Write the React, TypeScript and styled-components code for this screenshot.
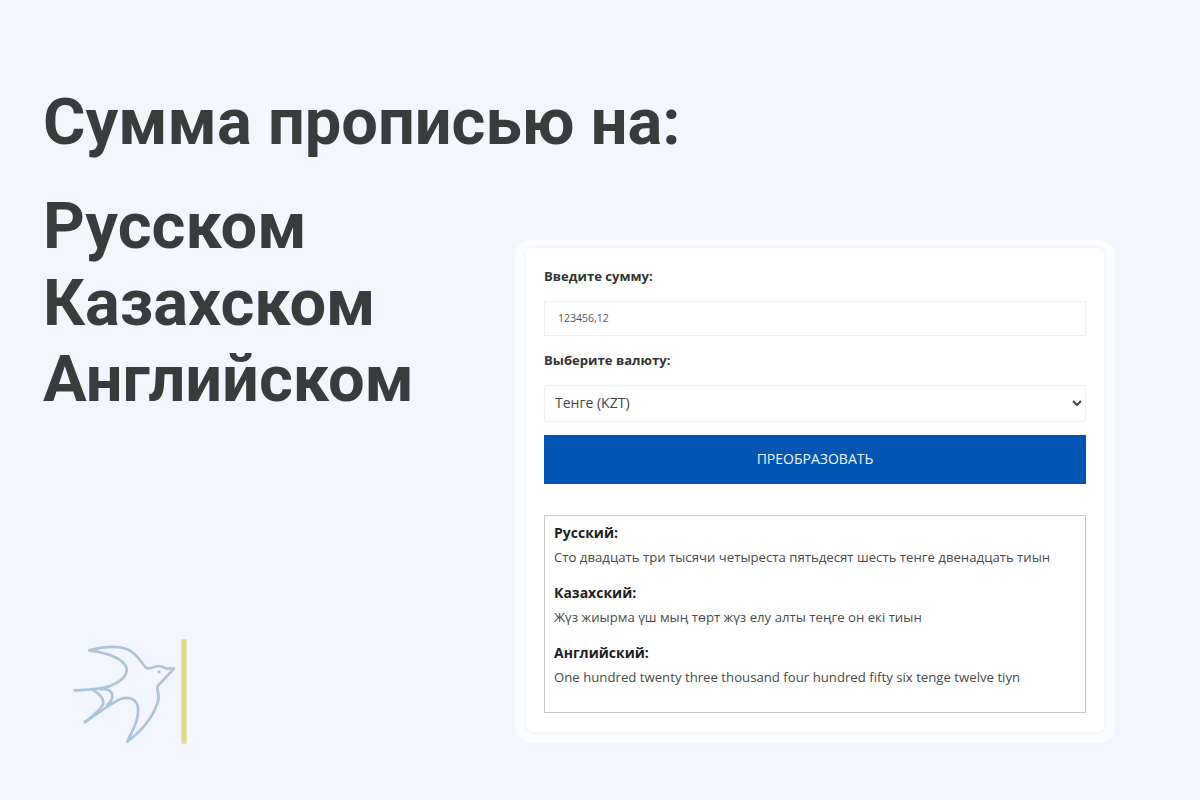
import { createGlobalStyle } from 'styled-components';
import styled from 'styled-components';

const GlobalStyle = createGlobalStyle`
  html, body {
    margin: 0;
    padding: 0;
    background: #f3f6ff;
  }
`;

const Page = styled.div`
  width: 1200px;
  height: 800px;
  box-sizing: border-box;
  padding: 0 85px 0 43px;
  display: flex;
  justify-content: space-between;
  overflow: hidden;
  background: #f3f6ff;
`;

// fixed width, the title is allowed to run over the card column
const LeftColumn = styled.div`
  width: 472px;
  display: flex;
  flex-direction: column;
  font-family: Roboto, sans-serif;
  font-weight: 700;
  color: #3a3b3d;
`;

const Title = styled.h1`
  margin: 84px 0 0;
  font-size: 65px;
  line-height: 76px;
  font-weight: 700;
  white-space: nowrap;
`;

const Languages = styled.div`
  margin-top: 28px;
  font-size: 65px;
  line-height: 76.5px;
  white-space: nowrap;
`;

const LogoRow = styled.div`
  margin-top: 202px;
  margin-left: 7px;
`;

const Frame = styled.div`
  margin-top: 240px;
  width: 600px;
  height: 503px;
  flex-shrink: 0;
  box-sizing: border-box;
  padding: 8px 11px 11px;
  background: #fbfcff;
  border-radius: 16px;
`;

const Card = styled.div`
  height: 100%;
  box-sizing: border-box;
  padding: 18px 18px 18px;
  background: #fff;
  border-radius: 8px;
  box-shadow: 0 0 4px rgba(40, 50, 90, 0.08);
  font-family: "Open Sans", sans-serif;
  color: #3a3a3a;
`;

const Label = styled.label`
  display: block;
  font-size: 13.1px;
  line-height: 20px;
  font-weight: 700;
  color: #333;
`;

const AmountInput = styled.input`
  display: block;
  width: 100%;
  height: 35px;
  box-sizing: border-box;
  margin: 15px 0 14px;
  padding: 0 10px 2px 13px;
  border: 1px solid #f0f0f0;
  border-radius: 0;
  background: #fff;
  font-family: "Open Sans", sans-serif;
  font-size: 10.5px;
  color: #555;
`;

const CurrencySelect = styled.select`
  display: block;
  width: 100%;
  height: 37px;
  box-sizing: border-box;
  margin: 15px 0 13px;
  padding: 0 6px 2px;
  border: 1px solid #f0f0f0;
  border-radius: 2px;
  background: #fff;
  font-family: "Open Sans", sans-serif;
  font-size: 14px;
  color: #444;
`;

const ConvertButton = styled.button`
  display: block;
  width: 100%;
  height: 49px;
  padding: 0 0 2px;
  border: 0;
  background: #0255b3;
  color: #eef4fb;
  font-family: "Open Sans", sans-serif;
  font-size: 14px;
  text-transform: uppercase;
`;

const ResultBox = styled.div`
  margin-top: 31px;
  height: 198px;
  box-sizing: border-box;
  padding: 7px 9px;
  border: 1px solid #c8c8c8;
`;

const ResultBlock = styled.div`
  margin-bottom: 16px;
`;

const ResultTitle = styled.div`
  font-size: 14px;
  line-height: 20px;
  font-weight: 700;
  color: #1d1d1d;
`;

const ResultText = styled.p`
  margin: 4px 0 0;
  font-size: 13.2px;
  line-height: 20px;
  color: #4a4a4a;
  white-space: nowrap;
`;

const results = [
  { title: 'Русский:', text: 'Сто двадцать три тысячи четыреста пятьдесят шесть тенге двенадцать тиын' },
  { title: 'Казахский:', text: 'Жүз жиырма үш мың төрт жүз елу алты теңге он екі тиын' },
  { title: 'Английский:', text: 'One hundred twenty three thousand four hundred fifty six tenge twelve tiyn' },
];

// bird + yellow bar, coordinates taken from the 3x crop
function Logo() {
  return (
    <svg width="160" height="140" viewBox="0 0 480 420" fill="none">
      <g stroke="#adc4db" strokeWidth="8" strokeLinejoin="round" strokeLinecap="round">
        {/* head, back, upper wing down to the tail tip */}
        <path d="M74 211 C110 210 150 209 180 198 C205 190 228 172 230 152 C232 130 205 115 180 105 C160 98 138 94 118 91 C160 80 205 78 232 88 C258 98 272 125 288 143 C298 150 310 140 325 138 C334 138 342 142 348 145 L372 146 L349 170 C340 182 328 190 322 200 C320 215 332 225 322 250 C305 300 265 340 232 365 C245 335 268 300 264 262 C260 240 240 228 215 236 C185 245 140 285 105 306" />
        {/* tail feathers */}
        <path d="M132 213 C150 220 162 238 160 252 C150 272 125 290 105 306" />
        <path d="M152 208 C172 205 186 212 187 226 C188 238 182 246 172 254" />
      </g>
      <circle cx="327" cy="156" r="5" fill="#adc4db" />
      <rect x="394" y="58" width="16" height="313" fill="#e0d98c" />
    </svg>
  );
}

export default function App() {
  return (
    <Page>
      <GlobalStyle />
      <LeftColumn>
        <Title>Сумма прописью на:</Title>
        <Languages>
          Русском
          <br />
          Казахском
          <br />
          Английском
        </Languages>
        <LogoRow>
          <Logo />
        </LogoRow>
      </LeftColumn>
      <Frame>
        <Card>
          <Label>Введите сумму:</Label>
          <AmountInput defaultValue="123456,12" />
          <Label>Выберите валюту:</Label>
          <CurrencySelect defaultValue="KZT">
            <option value="KZT">Тенге (KZT)</option>
          </CurrencySelect>
          <ConvertButton>Преобразовать</ConvertButton>
          <ResultBox>
            {results.map((r) => (
              <ResultBlock key={r.title}>
                <ResultTitle>{r.title}</ResultTitle>
                <ResultText>{r.text}</ResultText>
              </ResultBlock>
            ))}
          </ResultBox>
        </Card>
      </Frame>
    </Page>
  );
}
